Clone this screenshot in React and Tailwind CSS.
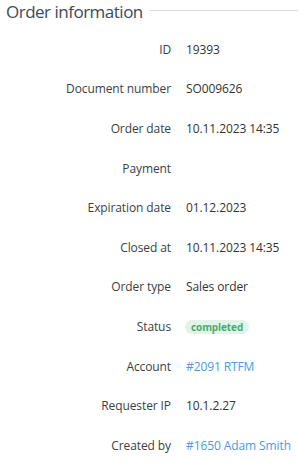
import * as React from 'react';

const ROWS = [
    { label: 'ID', value: '19393' },
    { label: 'Document number', value: 'SO009626' },
    { label: 'Order date', value: '10.11.2023 14:35' },
    { label: 'Payment', value: '' },
    { label: 'Expiration date', value: '01.12.2023' },
    { label: 'Closed at', value: '10.11.2023 14:35' },
    { label: 'Order type', value: 'Sales order' },
    { label: 'Status', badge: 'completed' },
    { label: 'Account', link: '#2091 RTFM' },
    { label: 'Requester IP', value: '10.1.2.27' },
    { label: 'Created by', link: '#1650 Adam Smith' },
];

export default function App() {
    return (
        <div className="w-[299px] h-[469px] bg-white overflow-hidden font-['Open_Sans',sans-serif] text-[#333]">
            {/* Section title */}
            <div className="flex items-center h-[22px] pl-[6px]">
                <h2 className="text-[17px] leading-none tracking-[-0.5px] text-[#3c4a57] whitespace-nowrap">Order information</h2>
                <div className="flex-1 h-px bg-[#dcdce4] ml-[6px] mr-[1px] -mt-[1px]" />
            </div>

            <div className="pt-[8px]">
                {ROWS.map(r => (
                    <div key={r.label} className="flex items-center h-[39.6px] text-[12px] tracking-[-0.1px]">
                        <span className="w-[171px] text-right text-[#3a3f44] whitespace-nowrap">{r.label}</span>
                        <div className="pl-[15px] whitespace-nowrap">
                            {r.value && <span>{r.value}</span>}
                            {r.link && <span className="text-[#4a9be0]">{r.link}</span>}
                            {r.badge && (
                                <span className="inline-block -ml-[1px] rounded-full bg-[#e2f4e9] text-[#4aab6e] font-bold text-[10px] leading-[14px] px-[6px] tracking-[-0.1px]">
                                    {r.badge}
                                </span>
                            )}
                        </div>
                    </div>
                ))}
            </div>
        </div>
    );
}
